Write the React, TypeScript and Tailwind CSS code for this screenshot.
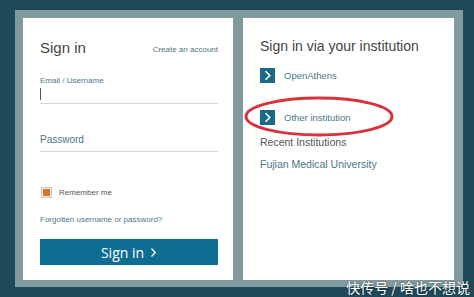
import React from "react";

const Arrow = () => (
  <div className="w-[15px] h-[15px] bg-[#1a6986] flex items-center justify-center shrink-0">
    <svg width="9" height="11" viewBox="0 0 9 11" fill="none">
      <path d="M2.5 1.2 L6.8 5.5 L2.5 9.8" stroke="white" strokeWidth="1.6" />
    </svg>
  </div>
);

export default function App() {
  return (
    <div className="relative w-[474px] h-[297px] bg-[#1e4958] pt-[10px] pl-[15px] overflow-hidden font-['Liberation_Sans',Arial,sans-serif]">
      <div className="w-[448px] h-[277px] bg-[#819a9e] p-[8px] flex gap-[10px]">
        {/* Left card */}
        <div className="w-[210px] h-[262px] bg-white pl-[17px] pr-[15px] pt-[19px] flex flex-col">
          <div className="flex items-end justify-between">
            <span className="text-[15px] leading-[21px] text-[#444]">Sign in</span>
            <span className="text-[8px] leading-[11px] text-[#4a7886] mb-[3px]">Create an account</span>
          </div>
          <div className="mt-[17px] text-[8px] leading-[11px] text-[#4a7886]">Email / Username</div>
          <div className="h-[18px] border-b border-[#d6d6d6] pt-[2px]">
            <div className="w-px h-[12px] bg-[#555]" />
          </div>
          <div className="mt-[29px] text-[10px] leading-[13px] text-[#4a7384]">Password</div>
          <div className="mt-[5px] border-b border-[#d6d6d6]" />
          <div className="mt-[35px] flex items-center">
            <div className="w-[11px] h-[11px] border border-[#d8c4b4] bg-[#f4ece6] flex items-center justify-center ml-px">
              <div className="w-[7px] h-[7px] bg-[#d9742a]" />
            </div>
            <span className="ml-[7px] text-[8px] leading-[11px] text-[#555]">Remember me</span>
          </div>
          <div className="mt-[16px] text-[8px] leading-[11px] text-[#4a7886]">Forgotten username or password?</div>
          <div className="mt-[14px] h-[26px] bg-[#0e6d91] flex items-center justify-center text-white text-[14px] font-['Open_Sans',sans-serif]">
            Sign in
            <svg className="ml-[6px]" width="7" height="11" viewBox="0 0 7 11" fill="none">
              <path d="M1.5 1.5 L5.2 5.5 L1.5 9.5" stroke="white" strokeWidth="1.3" />
            </svg>
          </div>
        </div>
        {/* Right card */}
        <div className="relative w-[211px] h-[262px] bg-white pl-[17px] pt-[19px] flex flex-col">
          <div className="text-[14px] leading-[19px] text-[#444]">Sign in via your institution</div>
          <div className="mt-[12px] flex items-center">
            <Arrow />
            <span className="ml-[9px] text-[9.5px] leading-[12px] text-[#4a7886]">OpenAthens</span>
          </div>
          <div className="mt-[27px] flex items-center">
            <Arrow />
            <span className="ml-[9px] text-[9.5px] leading-[12px] text-[#4a7886]">Other institution</span>
          </div>
          <div className="mt-[10px] text-[10.5px] leading-[14px] text-[#555]">Recent Institutions</div>
          <div className="mt-[8px] text-[10.5px] leading-[14px] text-[#4a7886]">Fujian Medical University</div>
        </div>
      </div>
      {/* Red ellipse annotation */}
      <svg className="absolute left-[243px] top-[95px]" width="152" height="43" viewBox="0 0 152 43" fill="none">
        <ellipse cx="76" cy="21.5" rx="73" ry="18.5" stroke="#d8323c" strokeWidth="3" />
      </svg>
      {/* Watermark */}
      <div className="absolute right-[4px] top-[279px] text-white text-[14px] leading-[17px] font-['Noto_Sans_CJK_SC',sans-serif] [text-shadow:0_0_2px_rgba(0,0,0,0.5)]">
        快传号 / 啥也不想说
      </div>
    </div>
  );
}
